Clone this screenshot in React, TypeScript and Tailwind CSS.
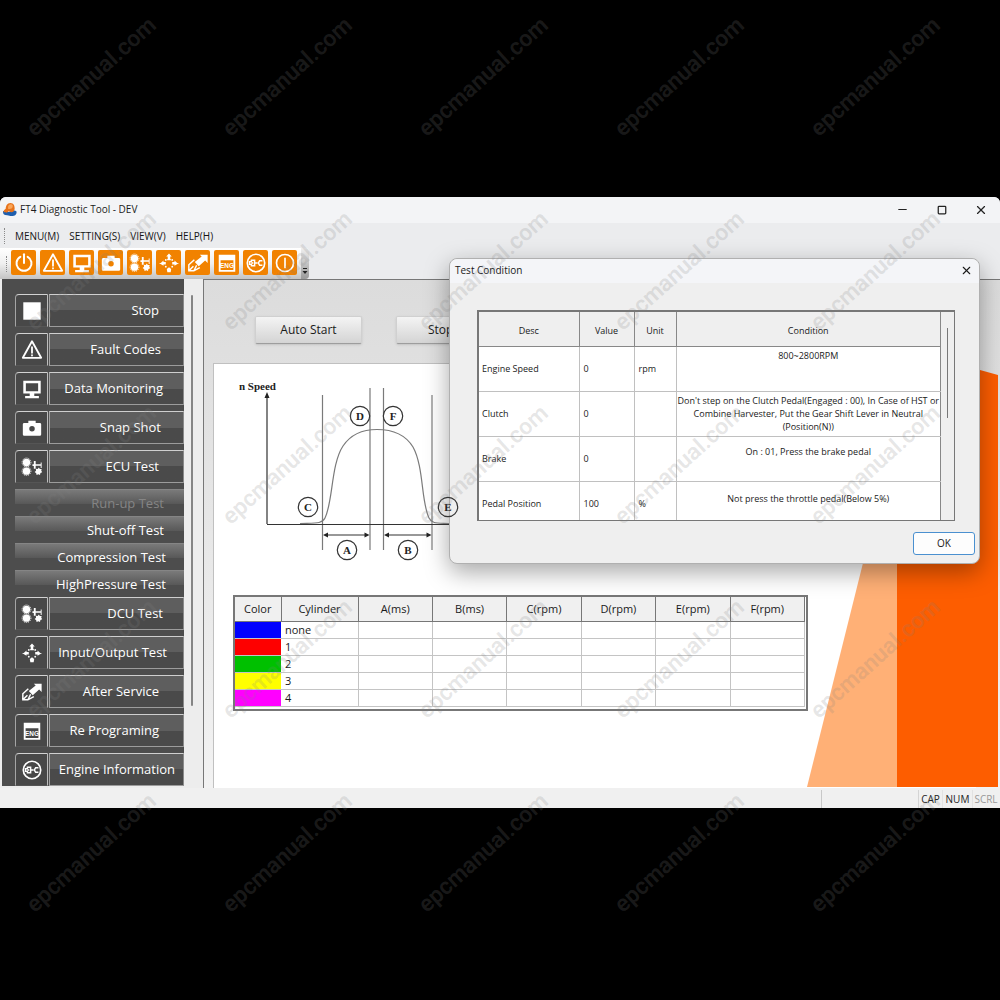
import type { ReactNode } from 'react';
import { Minus, Square, X } from 'lucide-react';
import { clsx } from 'clsx';

type IconName =
  | 'power' | 'stop' | 'alert' | 'monitor' | 'camera' | 'ecu'
  | 'io' | 'service' | 'eng' | 'engine' | 'info';

// All glyphs share a 24x24 box and take their colour from the parent.
const GLYPHS: Record<IconName, ReactNode> = {
  power: (
    <g fill="none" stroke="currentColor" strokeWidth="2.200" strokeLinecap="round">
      <path d="M8 5.200a8.200 8.200 0 1 0 8 0" />
      <path d="M12 2.500v9.500" />
    </g>
  ),
  stop: <path d="M2.500 2.500h19v19h-19z" fill="currentColor" />,
  alert: (
    <g fill="none" stroke="currentColor" strokeWidth="2" strokeLinejoin="round" strokeLinecap="round">
      <path d="M12 2.500 22 20.500H2z" />
      <path d="M12 9v6M12 17.600v.4" />
    </g>
  ),
  monitor: (
    <path
      d="M2.500 3h19v14h-7v2.500h5V22h-15v-2.500h5V17h-7zM5.300 5.600v8.800h13.400V5.600z"
      fill="currentColor"
      fillRule="evenodd"
    />
  ),
  camera: (
    <path
      d="M3.500 6.500H8V4h8v2.500h4.500a1.500 1.500 0 0 1 1.500 1.500v11a1.500 1.500 0 0 1-1.500 1.500h-17A1.500 1.500 0 0 1 2 19V8a1.500 1.500 0 0 1 1.500-1.500zM12 9.800a3 3 0 1 0 0 6 3 3 0 0 0 0-6z"
      fill="currentColor"
      fillRule="evenodd"
    />
  ),
  ecu: (
    <g fill="currentColor">
      <circle cx="6" cy="7" r="4" />
      <circle cx="6" cy="16.500" r="4" />
      <circle cx="6" cy="7" r="4.800" fill="none" stroke="currentColor" strokeDasharray="1.200 1" />
      <circle cx="6" cy="16.500" r="4.800" fill="none" stroke="currentColor" strokeDasharray="1.200 1" />
      <path d="M14 5.500h2V9h5.500V7h1v6h-1v-2.500H16V14h-2v-3h-1.500V9H14z" />
      <path d="m19.500 12.500 1 1.800 2-.2-.4 2 1 1.700-1.900.8-.5 2.100-1.700-.8-2 .8-.4-2-1.700-1.300 1.500-1.400-.2-2 2 .2z" />
    </g>
  ),
  io: (
    <g fill="currentColor">
      <path d="M12 1.500 15 5h-1.600v3h-2.800V5H9zM10 7.500h4v1.600h-4z" />
      <path d="M1 12h2l3-2.800v1.700h2.500v2.600H6V15zM23 12h-2l-3-2.800v1.700h-2.500v2.600H18V15z" />
      <path d="m12 16.500 2.400 2-.6 3.500h-3.600l-.6-3.500z" />
      <circle cx="8.500" cy="8.600" r="1" />
      <circle cx="15.500" cy="8.600" r="1" />
      <circle cx="8.500" cy="16" r="1" />
      <circle cx="15.500" cy="16" r="1" />
    </g>
  ),
  service: (
    <g fill="currentColor">
      <path d="M14 3h8.500v9l-2.700-2.700-7 6.200-4.300-4.500 7.500-6z" />
      <path
        d="M8 8.500 2 14v6.500h5.500L14 17M2 20.500l5-5M7.500 20.500l3-6"
        fill="none"
        stroke="currentColor"
        strokeWidth="1.600"
      />
    </g>
  ),
  eng: (
    <g>
      <path d="M3 3h18v18.500H3zM5 9v10.500h14V9z" fill="currentColor" fillRule="evenodd" />
      <text
        x="12"
        y="17"
        textAnchor="middle"
        fill="currentColor"
        fontSize="7"
        fontWeight="700"
        fontFamily="Liberation Sans, sans-serif"
      >
        ENG
      </text>
    </g>
  ),
  engine: (
    <g fill="none" stroke="currentColor" strokeWidth="1.600">
      <circle cx="12" cy="12" r="9.500" strokeWidth="1.800" />
      <path d="M10.500 9H7v1.500H5v3h2V15h3.500zM10.500 12h3M19 9.500h-3l-1.500 2.500 1.500 2.500h3M7 12h2" />
    </g>
  ),
  info: (
    <g fill="none" stroke="currentColor" strokeWidth="1.800" strokeLinecap="round">
      <circle cx="12" cy="12" r="9.300" />
      <path d="M12 7v10" />
    </g>
  ),
};

function Glyph({ name, className }: { name: IconName; className?: string }) {
  return (
    <svg viewBox="0 0 24 24" className={className} aria-hidden="true">
      {GLYPHS[name]}
    </svg>
  );
}

const TOOLBAR: { icon: IconName; label: string }[] = [
  { icon: 'power', label: 'Power' },
  { icon: 'alert', label: 'Fault codes' },
  { icon: 'monitor', label: 'Data monitoring' },
  { icon: 'camera', label: 'Snap shot' },
  { icon: 'ecu', label: 'ECU test' },
  { icon: 'io', label: 'Input/Output test' },
  { icon: 'service', label: 'After service' },
  { icon: 'eng', label: 'Re programing' },
  { icon: 'engine', label: 'Engine information' },
  { icon: 'info', label: 'About' },
];

type NavItem = { icon: IconName; label: string; pad: string };

const NAV_TOP: NavItem[] = [
  { icon: 'stop', label: 'Stop', pad: 'pr-6' },
  { icon: 'alert', label: 'Fault Codes', pad: 'pr-[22px]' },
  { icon: 'monitor', label: 'Data Monitoring', pad: 'pr-5' },
  { icon: 'camera', label: 'Snap Shot', pad: 'pr-[22px]' },
  { icon: 'ecu', label: 'ECU Test', pad: 'pr-6' },
];

const NAV_SUB = [
  { label: 'Run-up Test', pad: 'pr-5', disabled: true },
  { label: 'Shut-off Test', pad: 'pr-5', disabled: false },
  { label: 'Compression Test', pad: 'pr-[18px]', disabled: false },
  { label: 'HighPressure Test', pad: 'pr-[18px]', disabled: false },
];

const NAV_BOTTOM: NavItem[] = [
  { icon: 'ecu', label: 'DCU Test', pad: 'pr-5' },
  { icon: 'io', label: 'Input/Output Test', pad: 'pr-4' },
  { icon: 'service', label: 'After Service', pad: 'pr-6' },
  { icon: 'eng', label: 'Re Programing', pad: 'pr-6' },
  { icon: 'engine', label: 'Engine Information', pad: 'pr-2' },
];

const CYLINDERS = [
  { name: 'none', color: 'bg-[#0000fe]' },
  { name: '1', color: 'bg-[#fe0000]' },
  { name: '2', color: 'bg-[#00c000]' },
  { name: '3', color: 'bg-[#ffff00]' },
  { name: '4', color: 'bg-[#ff00ff]' },
];

const RESULT_COLUMNS = ['A(ms)', 'B(ms)', 'C(rpm)', 'D(rpm)', 'E(rpm)', 'F(rpm)'];

const CONDITIONS = [
  { desc: 'Engine Speed', value: '0', unit: 'rpm', text: '800~2800RPM', pad: 'pt-0.5' },
  {
    desc: 'Clutch',
    value: '0',
    unit: '',
    text: "Don't step on the Clutch Pedal(Engaged : 00), In Case of HST or Combine Harvester, Put the Gear Shift Lever in Neutral (Position(N))",
    pad: 'pt-0.5',
  },
  { desc: 'Brake', value: '0', unit: '', text: 'On : 01, Press the brake pedal', pad: 'pt-2' },
  { desc: 'Pedal Position', value: '100', unit: '%', text: 'Not press the throttle pedal(Below 5%)', pad: 'pt-2.5' },
];

function TitleBar() {
  return (
    <header className="flex h-[26px] items-center bg-[#f3f4f6] pb-px pl-0.5">
      <svg viewBox="0 0 16 16" className="size-[15px]" aria-hidden="true">
        <path d="M1 10c2-1 4 1 7 .5S13 8 15.500 10c.5 3-2 5-5 5-2 0-3-1-5-1-3 0-4.500-1-4.500-4z" fill="#1f5fae" />
        <path d="M4 9.500C3.500 4 5.500 1 9 1c3.500 0 4.500 3 4.500 6 0 2.500-1.500 4-3.500 4S8 9 6.500 10.500 4.200 11 4 9.500z" fill="#e8741c" />
        <path d="M1.500 10c1-2 2.500-3 4-3l1 3c-1.500 1-3.500 1.500-5 0z" fill="#e8741c" />
        <path d="M6.500 7.500C6 4 7.500 2.500 9.500 2.500s2.500 2 1.500 3.500-2.500 1-4.500 1.500z" fill="#f9a65a" />
      </svg>
      <h1 className="ml-[3px] flex-1 text-[10px] text-[#1c1c1c]">FT4 Diagnostic Tool - DEV</h1>
      <div className="flex text-[#222]">
        <button type="button" aria-label="Minimize" className="grid w-[39px] place-items-center">
          <Minus size={13} strokeWidth={2} />
        </button>
        <button type="button" aria-label="Maximize" className="grid w-[39px] place-items-center">
          <Square size={10} strokeWidth={3} />
        </button>
        <button type="button" aria-label="Close" className="grid w-[39px] place-items-center">
          <X size={14} strokeWidth={2} />
        </button>
      </div>
    </header>
  );
}

function Grip() {
  return <span className="h-4 border-l border-dotted border-[#8a8a8a]" />;
}

function MenuBar() {
  return (
    <nav className="flex h-[25px] items-center gap-2.5 bg-[#ebecee] pt-px pl-1 text-[10px] text-[#151515]">
      <Grip />
      <button type="button">MENU(M)</button>
      <button type="button">SETTING(S)</button>
      <button type="button">VIEW(V)</button>
      <button type="button">HELP(H)</button>
    </nav>
  );
}

function Toolbar() {
  return (
    <div className="flex h-[31px] bg-[#ebecee]">
      <div className="flex items-center gap-1 rounded-r bg-linear-to-b from-white via-[#f0f0f0] to-[#c4c4c4] pl-1.5">
        <Grip />
        {TOOLBAR.map((item) => (
          <button
            key={item.icon}
            type="button"
            aria-label={item.label}
            className="mb-0.5 grid size-[25px] place-items-center rounded-[2px] bg-[#f18200] text-white"
          >
            <Glyph name={item.icon} className="size-[22px]" />
          </button>
        ))}
        <button
          type="button"
          aria-label="Toolbar options"
          className="flex h-full w-2 items-end justify-center rounded-r bg-linear-to-b from-[#f0f0f0] to-[#9a9a9a] pb-1"
        >
          <svg viewBox="0 0 6 8" className="h-2 w-1.5" aria-hidden="true">
            <path d="M1 1h4v1H1zM0.500 4h5L3 7z" fill="#222" />
          </svg>
        </button>
      </div>
    </div>
  );
}

function NavButton({ icon, label, pad }: NavItem) {
  return (
    <button type="button" className="flex h-[33px] w-full gap-px text-white">
      <span className="grid h-full w-[33px] place-items-center rounded-tl border border-t-[#d2d2d2] border-r-[#bdbdbd] border-b-[#555] border-l-[#a5a5a5] bg-[#484848]">
        <Glyph name={icon} className="size-[22px]" />
      </span>
      <span
        className={clsx(
          'flex h-full flex-1 items-center justify-end border border-t-[#cfcfcf] border-r-[#8a8a8a] border-b-[#9c9c9c] border-l-[#a5a5a5] bg-linear-to-b from-[#5e5e5e] from-50% to-[#4a4a4a] to-50% text-[13px] whitespace-nowrap',
          pad,
        )}
      >
        {label}
      </span>
    </button>
  );
}

function Sidebar() {
  return (
    <div className="flex w-[203px] shrink-0 bg-[#ededed] pb-0.5 pl-0.5">
      <aside className="w-[182px] bg-[#4d4d4d] pt-[15px] pl-[13px]">
        <div className="flex flex-col gap-1.5 pb-1.5">
          {NAV_TOP.map((item) => (
            <NavButton key={item.label} {...item} />
          ))}
        </div>
        {NAV_SUB.map((item) => (
          <button
            key={item.label}
            type="button"
            disabled={item.disabled}
            className={clsx(
              'flex h-[27px] w-full items-center justify-end border-t border-[#858585] bg-linear-to-b from-[#7a7a7a] to-[#585858] bg-[length:100%_14px] bg-no-repeat pt-0.5 text-[13px]',
              item.pad,
              item.disabled ? 'text-[#858585]' : 'text-white',
            )}
          >
            {item.label}
          </button>
        ))}
        <div className="flex flex-col gap-1.5">
          {NAV_BOTTOM.map((item) => (
            <NavButton key={item.label} {...item} />
          ))}
        </div>
      </aside>
      <div className="ml-[7px] pt-4">
        <div className="h-[411px] w-0.5 rounded bg-[#858585]" />
      </div>
    </div>
  );
}

const MARKS = [
  { letter: 'D', x: 147, y: 52 },
  { letter: 'F', x: 180, y: 52 },
  { letter: 'C', x: 95, y: 143 },
  { letter: 'E', x: 235, y: 143 },
  { letter: 'A', x: 134, y: 186 },
  { letter: 'B', x: 195, y: 186 },
];

function SpeedChart() {
  return (
    <svg
      viewBox="1 0 250 205"
      className="relative z-20 h-[205px] w-[250px]"
      role="img"
      aria-label="Engine speed over time"
      fontFamily="Liberation Serif, serif"
      fontWeight="700"
    >
      <text x="26" y="26" fontSize="11" fill="#222">n Speed</text>
      <g fill="none" stroke="#7a7a7a" strokeWidth="1.200">
        <path d="M109.500 31v155M157 24v162M170.500 24v162M219 31v155" />
        <path d="M87 159.500C103 159 109 160 112 154C120 138 118 100 130 82C138 70 150 65.500 164 65.500C180 65.500 192 70 200 83C211 103 208 138 216 154C219 160 224 159 236 159.500" />
      </g>
      <path d="M54 160V34M54 160.500h182M112 171h42M173 171h43" fill="none" stroke="#333" strokeWidth="1.200" />
      <path d="m54 28 2.500 6h-5zM110 171l5-2.500v5zM156.500 171l-5-2.500v5zM171 171l5-2.500v5zM218.500 171l-5-2.500v5z" fill="#222" />
      {MARKS.map((m) => (
        <g key={m.letter}>
          <circle
            cx={m.x}
            cy={m.y}
            r="9.700"
            fill={m.letter === 'E' ? 'none' : '#fff'}
            stroke="#333"
            strokeWidth="1.200"
          />
          <text x={m.x} y={m.y + 4} fontSize="11" textAnchor="middle" fill="#222">
            {m.letter}
          </text>
        </g>
      ))}
    </svg>
  );
}

function ResultTable() {
  return (
    <div className="w-[575px] border-2 border-[#777] bg-white pr-px pb-0.5 text-[11px] text-[#1a1a1a]">
      <table className="w-full table-fixed border-collapse">
        <colgroup>
          <col className="w-[46px]" />
          <col className="w-[77px]" />
        </colgroup>
        <thead>
          <tr className="h-6 bg-[#f0f0f0]">
            {['Color', 'Cylinder', ...RESULT_COLUMNS].map((name) => (
              <th key={name} scope="col" className="border-r border-b border-[#777] p-0 font-normal">
                {name}
              </th>
            ))}
          </tr>
        </thead>
        <tbody>
          {CYLINDERS.map((row) => (
            <tr key={row.name} className="h-[17px]">
              <td className={clsx('border-b border-[#c4c4c4] p-0', row.color)} />
              <td className="border-r border-b border-[#c4c4c4] p-0 pl-1 leading-4">{row.name}</td>
              {RESULT_COLUMNS.map((name) => (
                <td key={name} className="border-r border-b border-[#c4c4c4] p-0" />
              ))}
            </tr>
          ))}
        </tbody>
      </table>
    </div>
  );
}

const PUSH_BUTTON =
  'h-7 w-[107px] rounded-[2px] border border-[#d0d0d0] border-b-[#9d9d9d] bg-linear-to-b from-[#f4f4f4] to-[#d4d4d4] text-xs text-[#1a1a1a] shadow-sm';

function RunUpTest() {
  return (
    <main className="relative flex flex-1 flex-col border-t border-l border-[#777] bg-linear-to-b from-[#dcdcdc] to-[#f2f2f2] pl-[9px]">
      <div className="flex gap-[34px] pt-9 pb-[19px] pl-[42px]">
        <button type="button" className={PUSH_BUTTON}>Auto Start</button>
        <button type="button" className={clsx(PUSH_BUTTON, 'pl-[31px] text-left')}>Stop</button>
      </div>
      <section className="mr-6 flex-1 border-t border-l border-[#c0c0c0] bg-white">
        <SpeedChart />
        <div className="pt-[26px] pl-[19px]">
          <ResultTable />
        </div>
      </section>
      {/* brand wedge in the lower right corner */}
      <svg viewBox="0 0 192 424" className="absolute right-0.5 bottom-px h-[424px] w-[192px]" aria-hidden="true">
        <path d="M1 424 107 0v424z" fill="#ffb076" />
        <path d="M91 60h10v364H91z" fill="#fd5d00" />
        <path d="M100 0v424h92V12l-18-5z" fill="#fd5d00" />
      </svg>
    </main>
  );
}

function StatusBar() {
  return (
    <footer className="flex h-5 justify-end bg-[#f0f0f0] pt-0.5 pr-px text-[10px] text-[#222]">
      <span className="w-[97px] border-l border-[#c8c8c8]" />
      <span className="grid w-6 place-items-center border-l border-[#d4d4d4]">CAP</span>
      <span className="grid w-[30px] place-items-center border-l border-[#e2e2e2]">NUM</span>
      <span className="grid w-[27px] place-items-center border-l border-[#e2e2e2] text-[#999]">SCRL</span>
    </footer>
  );
}

function TestConditionDialog() {
  return (
    <div
      role="dialog"
      aria-labelledby="condition-title"
      className="absolute top-[61px] right-5 z-10 w-[531px] rounded-lg border border-[#b0b0b0] bg-[#efefef] text-[#1a1a1a] shadow-[0_8px_24px_rgba(0,0,0,0.35)]"
    >
      <div className="flex h-6 items-center justify-between rounded-t-lg bg-[#f4f5f8] pr-1.5 pb-px pl-[5px]">
        <h2 id="condition-title" className="text-[10px]">Test Condition</h2>
        <button type="button" aria-label="Close dialog">
          <X size={13} strokeWidth={2} />
        </button>
      </div>
      <div className="mt-[27px] mr-6 ml-[27px] flex h-[211px] overflow-hidden border border-t-2 border-l-2 border-[#777] bg-white">
        <table className="h-[214px] flex-1 table-fixed border-collapse text-[9px]">
          <colgroup>
            <col className="w-[100px]" />
            <col className="w-[55px]" />
            <col className="w-[42px]" />
            <col />
          </colgroup>
          <thead>
            <tr className="h-[34px] bg-[#efefef]">
              {['Desc', 'Value', 'Unit', 'Condition'].map((name) => (
                <th key={name} scope="col" className="border-r border-b border-[#888] p-0 pt-1 font-normal">
                  {name}
                </th>
              ))}
            </tr>
          </thead>
          <tbody>
            {CONDITIONS.map((row) => (
              <tr key={row.desc} className="h-[45px]">
                <td className="border-r border-b border-[#c0c0c0] p-0 pl-[3px]">{row.desc}</td>
                <td className="border-r border-b border-[#c0c0c0] p-0 pl-1">{row.value}</td>
                <td className="border-r border-b border-[#c0c0c0] p-0 pl-1">{row.unit}</td>
                <td
                  className={clsx(
                    'border-r border-b border-r-[#888] border-b-[#c0c0c0] p-0 text-center align-top leading-[13px]',
                    row.pad,
                  )}
                >
                  {row.text}
                </td>
              </tr>
            ))}
          </tbody>
        </table>
        <div className="flex w-[13px] justify-center bg-[#efefef] pt-4">
          <div className="h-[90px] w-px bg-[#777]" />
        </div>
      </div>
      <div className="flex justify-end pt-[11px] pr-1 pb-2">
        <button type="button" className="h-[23px] w-[62px] rounded-[3px] border border-[#4a90d0] bg-[#fdfdfd] text-[10px]">
          OK
        </button>
      </div>
    </div>
  );
}

function Watermark() {
  return (
    <div aria-hidden="true" className="pointer-events-none absolute inset-0 z-30 overflow-hidden">
      <div className="-mt-5 -ml-1.5 grid auto-rows-[194px] grid-cols-[repeat(5,196px)]">
        {Array.from({ length: 25 }, (_, i) => (
          <div key={i} className="grid place-items-center">
            <span className="-rotate-[42deg] font-['Roboto',sans-serif] text-[23px] font-semibold text-[#808080]/20">
              epcmanual.com
            </span>
          </div>
        ))}
      </div>
    </div>
  );
}

export default function App() {
  return (
    <div className="relative min-h-screen bg-black pt-[197px] font-['Open_Sans','Noto_Sans',sans-serif]">
      <div className="relative overflow-hidden rounded-t-md bg-[#ebecee]">
        <TitleBar />
        <MenuBar />
        <Toolbar />
        <div className="flex">
          <Sidebar />
          <RunUpTest />
        </div>
        <StatusBar />
        <TestConditionDialog />
      </div>
      <Watermark />
    </div>
  );
}
